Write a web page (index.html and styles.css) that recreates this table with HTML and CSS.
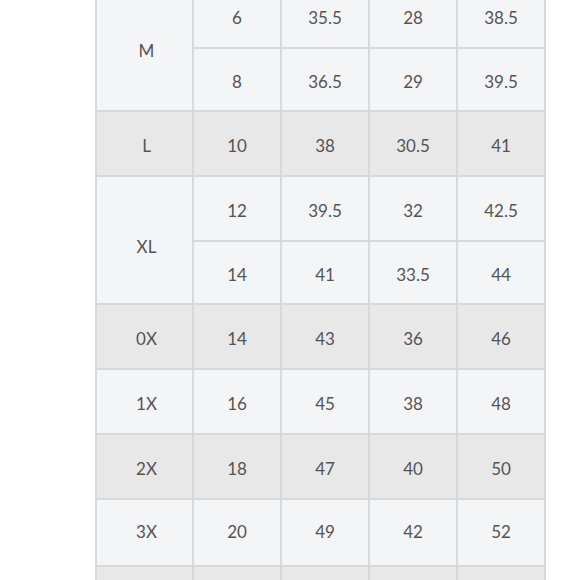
FILE: index.html
```html
<!DOCTYPE html>
<html lang="en">
<head>
<meta charset="utf-8">
<title>Size chart</title>
<link rel="stylesheet" href="styles.css">
</head>
<body>
<div class="chart">
  <div class="cell size light span2">M</div>
  <div class="cell light">6</div><div class="cell light">35.5</div><div class="cell light">28</div><div class="cell light">38.5</div>
  <div class="cell light">8</div><div class="cell light">36.5</div><div class="cell light">29</div><div class="cell light">39.5</div>

  <div class="cell size gray">L</div>
  <div class="cell gray">10</div><div class="cell gray">38</div><div class="cell gray">30.5</div><div class="cell gray">41</div>

  <div class="cell size light span2 xl">XL</div>
  <div class="cell light">12</div><div class="cell light">39.5</div><div class="cell light">32</div><div class="cell light">42.5</div>
  <div class="cell light">14</div><div class="cell light">41</div><div class="cell light">33.5</div><div class="cell light">44</div>

  <div class="cell size gray">0X</div>
  <div class="cell gray">14</div><div class="cell gray">43</div><div class="cell gray">36</div><div class="cell gray">46</div>

  <div class="cell size light">1X</div>
  <div class="cell light">16</div><div class="cell light">45</div><div class="cell light">38</div><div class="cell light">48</div>

  <div class="cell size gray">2X</div>
  <div class="cell gray">18</div><div class="cell gray">47</div><div class="cell gray">40</div><div class="cell gray">50</div>

  <div class="cell size light last">3X</div>
  <div class="cell light last">20</div><div class="cell light last">49</div><div class="cell light last">42</div><div class="cell light last">52</div>

  <div class="cell gray"></div>
  <div class="cell gray"></div><div class="cell gray"></div><div class="cell gray"></div><div class="cell gray"></div>
</div>
</body>
</html>
```

FILE: styles.css
```css
html, body {
  margin: 0;
  padding: 0;
  background: #ffffff;
  overflow: hidden;
}

body {
  padding-left: 95px;
  font-family: Lato, "Noto Sans", sans-serif;
}

.chart {
  margin-top: -17px;
  width: 451px;
  box-sizing: border-box;
  display: grid;
  grid-template-columns: 95px 86px 86px 86px 86px;
  grid-template-rows: 62px 61px 63px 63px 61px 63px 63px 63px 65px 63px;
  gap: 2px;
  padding: 2px;
  background: #d8d8d8;
}

.cell {
  display: flex;
  align-items: center;
  justify-content: center;
  padding-top: 3px;
  box-sizing: border-box;
  font-size: 17px;
  color: #545454;
}

.size {
  padding-left: 4px;
}

.last {
  padding-top: 0;
  padding-bottom: 2px;
}

.span2 {
  grid-row: span 2;
  padding-top: 5px;
}

.span2.xl {
  padding-top: 13px;
}

.light {
  background: #f4f5f6;
}

.gray {
  background: #e8e8e8;
}
```
